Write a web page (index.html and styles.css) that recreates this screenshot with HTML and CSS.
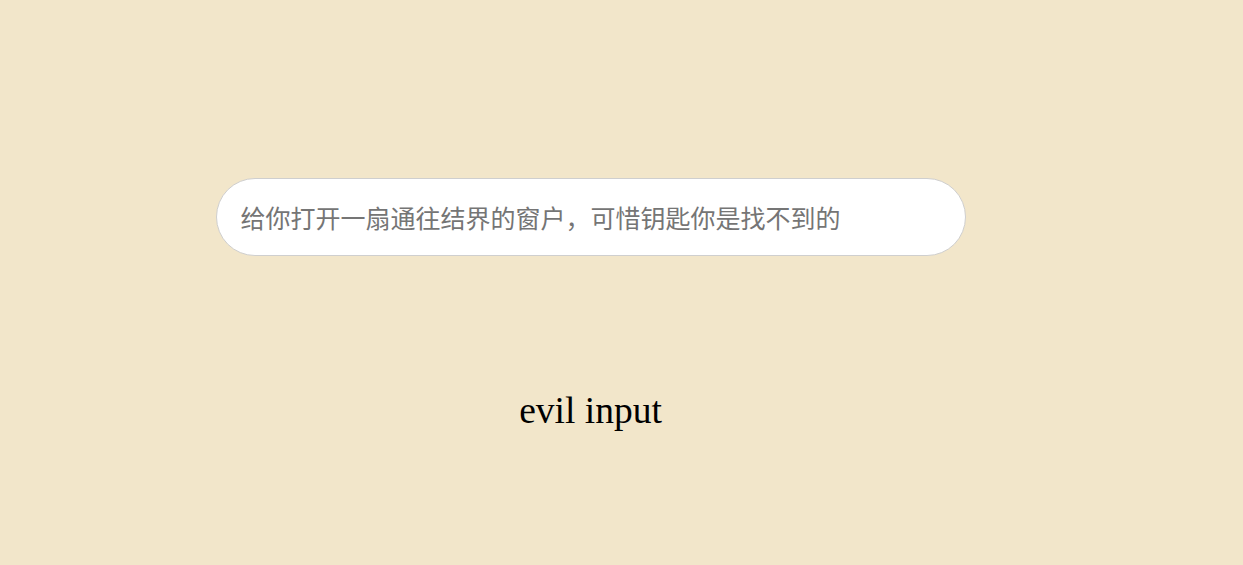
FILE: index.html
```html
<!DOCTYPE html>
<html>
<head>
<meta charset="utf-8">
<link rel="stylesheet" href="styles.css">
</head>
<body>
<main class="page">
  <div class="stage">
    <input class="search" type="text" placeholder="给你打开一扇通往结界的窗户，可惜钥匙你是找不到的">
    <p class="caption">evil input</p>
  </div>
</main>
</body>
</html>
```
FILE: styles.css
```css
html, body {
  margin: 0;
  padding: 0;
  background: #f2e6ca;
  height: 100%;
}
.page {
  width: 1181px;
  display: flex;
  flex-direction: column;
  align-items: center;
}
.stage {
  padding-top: 178px;
  display: flex;
  flex-direction: column;
  align-items: center;
}
.search {
  box-sizing: border-box;
  width: 750px;
  height: 78px;
  border: 1px solid #cfcfcf;
  border-radius: 39px;
  background: #fff;
  padding: 0 24px;
  font-family: "Noto Sans CJK SC", "Liberation Sans", sans-serif;
  font-size: 25px;
  color: #333;
  outline: none;
}
.search::placeholder {
  color: #757575;
}
.caption {
  margin: 136px 0 0;
  font-family: "Liberation Serif", serif;
  font-size: 37.5px;
  color: #000;
  line-height: 1;
}
```
